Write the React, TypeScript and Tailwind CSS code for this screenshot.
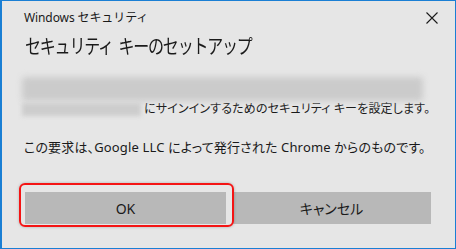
import React from 'react';

const font = "font-['Noto_Sans','Noto_Sans_CJK_JP',sans-serif]";

const CloseIcon: React.FC = () => (
  <svg width="12" height="12" viewBox="0 0 12 12" className="block">
    <path d="M0.5 0.5 L11.5 11.5 M11.5 0.5 L0.5 11.5" stroke="#1a1a1a" strokeWidth="1.1" fill="none" />
  </svg>
);

export default function App() {
  return (
    <div className={`w-[456px] h-[249px] bg-[#e6e6e6] ${font} text-[#1a1a1a] relative border-y border-l-2 border-r border-[#1a7fd4] overflow-hidden`}>
      <div className="flex items-start justify-between pl-[22px] pr-[17px] pt-[9px]">
        <span className="text-[12px] leading-[16px] tracking-[-0.1px]">Windows セキュリティ</span>
        <div className="pt-[2px]">
          <CloseIcon />
        </div>
      </div>

      <div className="pl-[23px] mt-[8px]">
        <h1 className="text-[20px] leading-[26px] tracking-[-1.5px] whitespace-nowrap origin-left scale-x-[0.8]">
          セキュリティ<span className="inline-block w-[7px]" />キーのセットアップ
        </h1>
      </div>

      <div className="pl-[20px] pr-[32px] mt-[17px]">
        <div className="h-[24px] bg-[#cbcbcb] blur-[3px] rounded-sm" />
        <div className="flex items-center h-[14px] mt-[1px]">
          <div className="w-[119px] h-[13px] shrink-0 bg-[#cdcdcd] blur-[2px]" />
          <span className="ml-[3px] text-[12px] leading-[14px] [font-feature-settings:'palt'] tracking-[0.15px] whitespace-nowrap">
            にサインインするためのセキュリティ キーを設定します。
          </span>
        </div>
      </div>

      <p className="pl-[22px] mt-[22px] text-[13px] leading-[18px] [font-feature-settings:'palt'] tracking-[0.15px] whitespace-nowrap">
        この要求は、Google LLC によって発行された Chrome からのものです。
      </p>

      <div className="flex gap-[6px] pl-[23px] mt-[36px]">
        <button className="w-[201px] h-[32px] bg-[#b8b8b8] text-[14px]">OK</button>
        <button className="w-[199px] h-[32px] bg-[#b8b8b8] text-[14px] [font-feature-settings:'palt']">キャンセル</button>
      </div>

      <div className="absolute left-[17px] top-[182px] w-[215px] h-[44px] rounded-[6px] border-2 border-[#f41414] shadow-[0_0_3px_rgba(0,0,0,0.25)]" />
    </div>
  );
}
